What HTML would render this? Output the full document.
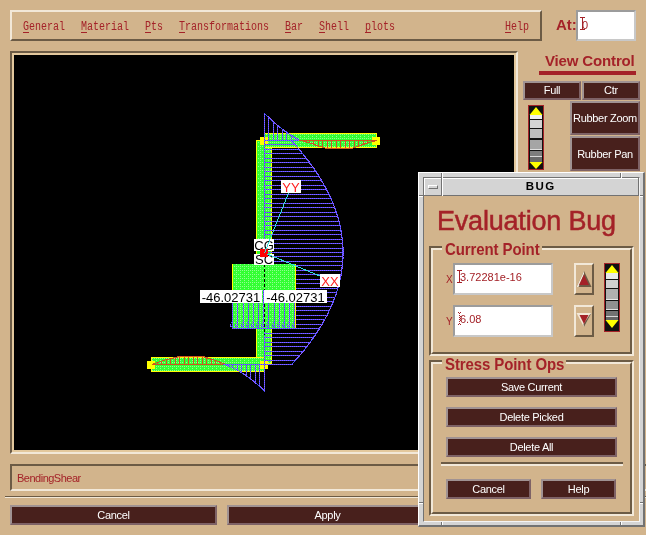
<!DOCTYPE html><html><head><meta charset="utf-8"><style>
html,body{margin:0;padding:0;width:646px;height:535px;overflow:hidden;background:#D2B48C;position:relative;font-family:'Liberation Sans',sans-serif}
body>div{position:absolute;box-sizing:border-box;will-change:transform}
u{text-decoration:underline;text-underline-offset:2.0px;text-decoration-thickness:0.8px}
</style></head><body>
<div style="left:10px;top:10px;width:532px;height:31px;border:2px solid;border-color:#F2E8D8 #6C5B45 #6C5B45 #F2E8D8;"></div>
<div style="left:23px;top:20px;white-space:pre;font-family:'Liberation Mono',monospace;font-size:10px;line-height:12px;transform:scaleY(1.25);transform-origin:0 0;color:#A42228">General</div>
<div style="left:23px;top:32px;width:6px;height:1px;background:#A42228"></div>
<div style="left:81px;top:20px;white-space:pre;font-family:'Liberation Mono',monospace;font-size:10px;line-height:12px;transform:scaleY(1.25);transform-origin:0 0;color:#A42228">Material</div>
<div style="left:81px;top:32px;width:6px;height:1px;background:#A42228"></div>
<div style="left:145px;top:20px;white-space:pre;font-family:'Liberation Mono',monospace;font-size:10px;line-height:12px;transform:scaleY(1.25);transform-origin:0 0;color:#A42228">Pts</div>
<div style="left:145px;top:32px;width:6px;height:1px;background:#A42228"></div>
<div style="left:179px;top:20px;white-space:pre;font-family:'Liberation Mono',monospace;font-size:10px;line-height:12px;transform:scaleY(1.25);transform-origin:0 0;color:#A42228">Transformations</div>
<div style="left:179px;top:32px;width:6px;height:1px;background:#A42228"></div>
<div style="left:285px;top:20px;white-space:pre;font-family:'Liberation Mono',monospace;font-size:10px;line-height:12px;transform:scaleY(1.25);transform-origin:0 0;color:#A42228">Bar</div>
<div style="left:285px;top:32px;width:6px;height:1px;background:#A42228"></div>
<div style="left:319px;top:20px;white-space:pre;font-family:'Liberation Mono',monospace;font-size:10px;line-height:12px;transform:scaleY(1.25);transform-origin:0 0;color:#A42228">Shell</div>
<div style="left:319px;top:32px;width:6px;height:1px;background:#A42228"></div>
<div style="left:365px;top:20px;white-space:pre;font-family:'Liberation Mono',monospace;font-size:10px;line-height:12px;transform:scaleY(1.25);transform-origin:0 0;color:#A42228">plots</div>
<div style="left:365px;top:32px;width:6px;height:1px;background:#A42228"></div>
<div style="left:505px;top:20px;white-space:pre;font-family:'Liberation Mono',monospace;font-size:10px;line-height:12px;transform:scaleY(1.25);transform-origin:0 0;color:#A42228">Help</div>
<div style="left:505px;top:32px;width:6px;height:1px;background:#A42228"></div>
<div style="left:556px;top:16px;white-space:pre;font:bold 15px 'Liberation Sans',sans-serif;color:#A42228">At:</div>
<div style="left:576px;top:10px;width:60px;height:31px;border:2px solid;border-color:#9C9C9C #C8C8C8 #C8C8C8 #9C9C9C;background:#fff;"></div>
<div style="left:582px;top:19px;white-space:pre;font:11px 'Liberation Sans',sans-serif;color:#A42228">0</div>
<div style="left:580px;top:17px;width:5px;height:1px;background:#A42228"></div>
<div style="left:580px;top:29px;width:5px;height:1px;background:#A42228"></div>
<div style="left:582px;top:17px;width:1px;height:13px;background:#A42228"></div>
<div style="left:545px;top:52px;white-space:pre;font:bold 15px 'Liberation Sans',sans-serif;color:#A42228;letter-spacing:-0.15px">View Control</div>
<div style="left:539px;top:71px;width:97px;height:4px;background:#A42228"></div>
<div style="left:523px;top:81px;width:58px;height:19px;border:2px solid;border-color:#A09292 #7E6266 #7E6266 #A09292;background:#48201C;color:#fff;font:11px/15px 'Liberation Sans',sans-serif;letter-spacing:-0.3px;text-align:center;white-space:pre"><span style="position:relative;top:0px">Full</span></div>
<div style="left:582px;top:81px;width:58px;height:19px;border:2px solid;border-color:#A09292 #7E6266 #7E6266 #A09292;background:#48201C;color:#fff;font:11px/15px 'Liberation Sans',sans-serif;letter-spacing:-0.3px;text-align:center;white-space:pre"><span style="position:relative;top:0px">Ctr</span></div>
<div style="left:570px;top:101px;width:70px;height:34px;border:2px solid;border-color:#A09292 #7E6266 #7E6266 #A09292;background:#48201C;color:#fff;font:11px/30px 'Liberation Sans',sans-serif;letter-spacing:-0.3px;text-align:center;white-space:pre"><span style="position:relative;top:0px">Rubber Zoom</span></div>
<div style="left:570px;top:136px;width:70px;height:35px;border:2px solid;border-color:#A09292 #7E6266 #7E6266 #A09292;background:#48201C;color:#fff;font:11px/31px 'Liberation Sans',sans-serif;letter-spacing:-0.3px;text-align:center;white-space:pre"><span style="position:relative;top:1px">Rubber Pan</span></div>
<div style="left:10px;top:51px;width:508px;height:403px;border:2px solid;border-color:#6C5B45 #F2E8D8 #F2E8D8 #6C5B45;"></div>
<div style="left:12px;top:53px;width:504px;height:399px;border:2px solid #E3C89D;"></div>
<svg style="position:absolute;left:14px;top:55px;will-change:transform" width="500" height="395" viewBox="14 55 500 395" shape-rendering="crispEdges"><defs><pattern id="gp" width="4" height="4" patternUnits="userSpaceOnUse"><rect width="4" height="4" fill="#33FF33"/><rect x="0" y="0" width="1" height="1" fill="#90FF90"/><rect x="0" y="2" width="1" height="1" fill="#90FF90"/><rect x="2" y="2" width="1" height="1" fill="#90FF90"/></pattern><pattern id="bp" width="2" height="2" patternUnits="userSpaceOnUse"><rect width="2" height="2" fill="#3C50FF"/><rect x="0" y="0" width="1" height="1" fill="#9A5CFF"/><rect x="1" y="1" width="1" height="1" fill="#9A5CFF"/></pattern></defs><rect x="14" y="55" width="500" height="395" fill="#000"/><rect x="256" y="140" width="16" height="224" fill="#FFFF00"/><rect x="257" y="141" width="14" height="222" fill="url(#gp)"/><rect x="264" y="133" width="113" height="15" fill="#FFFF00"/><rect x="265" y="134" width="111" height="13" fill="url(#gp)"/><rect x="151" y="357" width="114" height="15" fill="#FFFF00"/><rect x="152" y="358" width="112" height="13" fill="url(#gp)"/><rect x="372" y="137" width="8" height="8" fill="#FFFF00"/><rect x="260" y="137" width="8" height="8" fill="#FFFF00"/><rect x="147" y="361" width="8" height="8" fill="#FFFF00"/><rect x="260" y="361" width="8" height="8" fill="#FFFF00"/><polyline points="299.8,140.1 310.5,143.2 318.4,146.0 326.1,148.3 352.5,148.3 358.5,146.0 367.9,142.9 376.5,140.4" fill="none" stroke="#CC5522" stroke-width="1.1"/><rect x="299" y="140" width="78" height="1" fill="#CC5522"/><rect x="304" y="140" width="1" height="2" fill="#CC5522"/><rect x="309" y="140" width="1" height="3" fill="#CC5522"/><rect x="313" y="140" width="1" height="5" fill="#CC5522"/><rect x="318" y="140" width="1" height="7" fill="#CC5522"/><rect x="322" y="140" width="1" height="8" fill="#CC5522"/><rect x="327" y="140" width="1" height="9" fill="#CC5522"/><rect x="331" y="140" width="1" height="9" fill="#CC5522"/><rect x="336" y="140" width="1" height="9" fill="#CC5522"/><rect x="340" y="140" width="1" height="9" fill="#CC5522"/><rect x="345" y="140" width="1" height="9" fill="#CC5522"/><rect x="349" y="140" width="1" height="9" fill="#CC5522"/><rect x="354" y="140" width="1" height="8" fill="#CC5522"/><rect x="358" y="140" width="1" height="7" fill="#CC5522"/><rect x="363" y="140" width="1" height="5" fill="#CC5522"/><rect x="367" y="140" width="1" height="4" fill="#CC5522"/><rect x="372" y="140" width="1" height="2" fill="#CC5522"/><polyline points="153.4,364.0 158.7,362.1 165.2,360.0 170.5,358.7 178.4,356.8 204.1,356.8 208.7,358.4 215.2,360.4 221.2,362.6 224.5,364.0" fill="none" stroke="#CC5522" stroke-width="1.1"/><rect x="152" y="364" width="72" height="1" fill="#CC5522"/><rect x="220" y="362" width="1" height="3" fill="#CC5522"/><rect x="215" y="360" width="1" height="5" fill="#CC5522"/><rect x="211" y="359" width="1" height="6" fill="#CC5522"/><rect x="206" y="357" width="1" height="8" fill="#CC5522"/><rect x="202" y="356" width="1" height="9" fill="#CC5522"/><rect x="197" y="356" width="1" height="9" fill="#CC5522"/><rect x="193" y="356" width="1" height="9" fill="#CC5522"/><rect x="188" y="356" width="1" height="9" fill="#CC5522"/><rect x="184" y="356" width="1" height="9" fill="#CC5522"/><rect x="179" y="356" width="1" height="9" fill="#CC5522"/><rect x="175" y="357" width="1" height="8" fill="#CC5522"/><rect x="170" y="358" width="1" height="7" fill="#CC5522"/><rect x="166" y="359" width="1" height="6" fill="#CC5522"/><rect x="161" y="361" width="1" height="4" fill="#CC5522"/><rect x="157" y="362" width="1" height="3" fill="#CC5522"/><polyline points="291.2,140.5 292.1,141.5 293.0,142.5 293.9,143.5 294.8,144.5 295.7,145.5 296.6,146.5 297.5,147.5 298.3,148.5 299.2,149.5 300.0,150.5 300.9,151.5 301.7,152.5 302.5,153.5 303.3,154.5 304.1,155.5 304.9,156.5 305.7,157.5 306.5,158.5 307.2,159.5 308.0,160.5 308.8,161.5 309.5,162.5 310.2,163.5 311.0,164.5 311.7,165.5 312.4,166.5 313.1,167.5 313.8,168.5 314.5,169.5 315.2,170.5 315.9,171.5 316.5,172.5 317.2,173.5 317.8,174.5 318.5,175.5 319.1,176.5 319.7,177.5 320.3,178.5 320.9,179.5 321.5,180.5 322.1,181.5 322.7,182.5 323.3,183.5 323.8,184.5 324.4,185.5 324.9,186.5 325.5,187.5 326.0,188.5 326.5,189.5 327.1,190.5 327.6,191.5 328.1,192.5 328.6,193.5 329.0,194.5 329.5,195.5 330.0,196.5 330.4,197.5 330.9,198.5 331.3,199.5 331.8,200.5 332.2,201.5 332.6,202.5 333.0,203.5 333.4,204.5 333.8,205.5 334.2,206.5 334.6,207.5 334.9,208.5 335.3,209.5 335.7,210.5 336.0,211.5 336.3,212.5 336.7,213.5 337.0,214.5 337.3,215.5 337.6,216.5 337.9,217.5 338.2,218.5 338.4,219.5 338.7,220.5 339.0,221.5 339.2,222.5 339.5,223.5 339.7,224.5 339.9,225.5 340.2,226.5 340.4,227.5 340.6,228.5 340.8,229.5 341.0,230.5 341.1,231.5 341.3,232.5 341.5,233.5 341.6,234.5 341.8,235.5 341.9,236.5 342.0,237.5 342.2,238.5 342.3,239.5 342.4,240.5 342.5,241.5 342.6,242.5 342.6,243.5 342.7,244.5 342.8,245.5 342.8,246.5 342.9,247.5 342.9,248.5 343.0,249.5 343.0,250.5 343.0,251.5 343.0,252.5 343.0,253.5 343.0,254.5 343.0,255.5 342.9,256.5 342.9,257.5 342.9,258.5 342.8,259.5 342.8,260.5 342.7,261.5 342.6,262.5 342.5,263.5 342.4,264.5 342.3,265.5 342.2,266.5 342.1,267.5 342.0,268.5 341.9,269.5 341.7,270.5 341.6,271.5 341.4,272.5 341.2,273.5 341.1,274.5 340.9,275.5 340.7,276.5 340.5,277.5 340.3,278.5 340.1,279.5 339.8,280.5 339.6,281.5 339.4,282.5 339.1,283.5 338.9,284.5 338.6,285.5 338.3,286.5 338.1,287.5 337.8,288.5 337.5,289.5 337.2,290.5 336.8,291.5 336.5,292.5 336.2,293.5 335.9,294.5 335.5,295.5 335.2,296.5 334.8,297.5 334.4,298.5 334.0,299.5 333.7,300.5 333.3,301.5 332.9,302.5 332.4,303.5 332.0,304.5 331.6,305.5 331.2,306.5 330.7,307.5 330.3,308.5 329.8,309.5 329.3,310.5 328.8,311.5 328.4,312.5 327.9,313.5 327.4,314.5 326.9,315.5 326.3,316.5 325.8,317.5 325.3,318.5 324.7,319.5 324.2,320.5 323.6,321.5 323.0,322.5 322.5,323.5 321.9,324.5 321.3,325.5 320.7,326.5 320.1,327.5 319.5,328.5 318.8,329.5 318.2,330.5 317.6,331.5 316.9,332.5 316.3,333.5 315.6,334.5 314.9,335.5 314.2,336.5 313.5,337.5 312.8,338.5 312.1,339.5 311.4,340.5 310.7,341.5 310.0,342.5 309.2,343.5 308.5,344.5 307.7,345.5 306.9,346.5 306.2,347.5 305.4,348.5 304.6,349.5 303.8,350.5 303.0,351.5 302.2,352.5 301.4,353.5 300.5,354.5 299.7,355.5 298.8,356.5 298.0,357.5 297.1,358.5 296.2,359.5 295.4,360.5 294.5,361.5 293.6,362.5 292.7,363.5 291.8,364.5" fill="none" stroke="url(#bp)" stroke-width="1.2"/><rect x="264" y="140" width="27" height="1" fill="url(#bp)"/><rect x="264" y="144" width="31" height="1" fill="url(#bp)"/><rect x="264" y="149" width="35" height="1" fill="url(#bp)"/><rect x="264" y="153" width="39" height="1" fill="url(#bp)"/><rect x="264" y="158" width="42" height="1" fill="url(#bp)"/><rect x="264" y="162" width="46" height="1" fill="url(#bp)"/><rect x="264" y="167" width="49" height="1" fill="url(#bp)"/><rect x="264" y="171" width="52" height="1" fill="url(#bp)"/><rect x="264" y="176" width="55" height="1" fill="url(#bp)"/><rect x="264" y="180" width="58" height="1" fill="url(#bp)"/><rect x="264" y="185" width="60" height="1" fill="url(#bp)"/><rect x="264" y="189" width="63" height="1" fill="url(#bp)"/><rect x="264" y="194" width="65" height="1" fill="url(#bp)"/><rect x="264" y="198" width="67" height="1" fill="url(#bp)"/><rect x="264" y="203" width="69" height="1" fill="url(#bp)"/><rect x="264" y="207" width="71" height="1" fill="url(#bp)"/><rect x="264" y="212" width="72" height="1" fill="url(#bp)"/><rect x="264" y="216" width="74" height="1" fill="url(#bp)"/><rect x="264" y="221" width="75" height="1" fill="url(#bp)"/><rect x="264" y="225" width="76" height="1" fill="url(#bp)"/><rect x="264" y="230" width="77" height="1" fill="url(#bp)"/><rect x="264" y="234" width="78" height="1" fill="url(#bp)"/><rect x="264" y="239" width="78" height="1" fill="url(#bp)"/><rect x="264" y="243" width="79" height="1" fill="url(#bp)"/><rect x="264" y="248" width="79" height="1" fill="url(#bp)"/><rect x="264" y="252" width="79" height="1" fill="url(#bp)"/><rect x="264" y="256" width="79" height="1" fill="url(#bp)"/><rect x="264" y="261" width="79" height="1" fill="url(#bp)"/><rect x="264" y="265" width="78" height="1" fill="url(#bp)"/><rect x="264" y="270" width="78" height="1" fill="url(#bp)"/><rect x="264" y="274" width="77" height="1" fill="url(#bp)"/><rect x="264" y="279" width="76" height="1" fill="url(#bp)"/><rect x="264" y="283" width="75" height="1" fill="url(#bp)"/><rect x="264" y="288" width="74" height="1" fill="url(#bp)"/><rect x="264" y="292" width="73" height="1" fill="url(#bp)"/><rect x="264" y="297" width="71" height="1" fill="url(#bp)"/><rect x="264" y="301" width="69" height="1" fill="url(#bp)"/><rect x="264" y="306" width="67" height="1" fill="url(#bp)"/><rect x="264" y="310" width="65" height="1" fill="url(#bp)"/><rect x="264" y="315" width="63" height="1" fill="url(#bp)"/><rect x="264" y="319" width="61" height="1" fill="url(#bp)"/><rect x="264" y="324" width="58" height="1" fill="url(#bp)"/><rect x="264" y="328" width="55" height="1" fill="url(#bp)"/><rect x="264" y="333" width="52" height="1" fill="url(#bp)"/><rect x="264" y="337" width="50" height="1" fill="url(#bp)"/><rect x="264" y="342" width="46" height="1" fill="url(#bp)"/><rect x="264" y="346" width="43" height="1" fill="url(#bp)"/><rect x="264" y="351" width="39" height="1" fill="url(#bp)"/><rect x="264" y="355" width="36" height="1" fill="url(#bp)"/><rect x="264" y="360" width="31" height="1" fill="url(#bp)"/><rect x="264" y="364" width="28" height="1" fill="url(#bp)"/><rect x="264" y="113" width="1" height="279" fill="url(#bp)"/><polyline points="264.5,113.4 265.5,114.4 266.5,115.4 267.5,116.4 268.5,117.3 269.5,118.2 270.5,119.2 271.5,120.1 272.5,121.0 273.5,121.9 274.5,122.8 275.5,123.6 276.5,124.5 277.5,125.3 278.5,126.1 279.5,126.9 280.5,127.7 281.5,128.5 282.5,129.3 283.5,130.0 284.5,130.8 285.5,131.5 286.5,132.2 287.5,132.9 288.5,133.6 289.5,134.3 290.5,134.9 291.5,135.6 292.5,136.2 293.5,136.8 294.5,137.5 295.5,138.1 296.5,138.6 297.5,139.2 298.5,139.8" fill="none" stroke="url(#bp)" stroke-width="1.2"/><rect x="268" y="117" width="1" height="23" fill="url(#bp)"/><rect x="273" y="121" width="1" height="19" fill="url(#bp)"/><rect x="277" y="125" width="1" height="15" fill="url(#bp)"/><rect x="282" y="129" width="1" height="11" fill="url(#bp)"/><rect x="286" y="132" width="1" height="8" fill="url(#bp)"/><rect x="291" y="135" width="1" height="5" fill="url(#bp)"/><rect x="295" y="138" width="1" height="2" fill="url(#bp)"/><rect x="264" y="140" width="35" height="1" fill="url(#bp)"/><polyline points="223.5,364.1 224.5,364.4 225.5,364.8 226.5,365.1 227.5,365.5 228.5,365.9 229.5,366.3 230.5,366.8 231.5,367.2 232.5,367.7 233.5,368.2 234.5,368.7 235.5,369.2 236.5,369.7 237.5,370.3 238.5,370.8 239.5,371.4 240.5,372.0 241.5,372.6 242.5,373.2 243.5,373.9 244.5,374.5 245.5,375.2 246.5,375.9 247.5,376.6 248.5,377.3 249.5,378.0 250.5,378.8 251.5,379.6 252.5,380.4 253.5,381.2 254.5,382.0 255.5,382.8 256.5,383.7 257.5,384.5 258.5,385.4 259.5,386.3 260.5,387.2 261.5,388.1 262.5,389.1 263.5,390.1 264.5,391.0" fill="none" stroke="url(#bp)" stroke-width="1.2"/><rect x="223" y="364" width="42" height="1" fill="url(#bp)"/><rect x="259" y="364" width="1" height="23" fill="url(#bp)"/><rect x="255" y="364" width="1" height="19" fill="url(#bp)"/><rect x="250" y="364" width="1" height="15" fill="url(#bp)"/><rect x="246" y="364" width="1" height="12" fill="url(#bp)"/><rect x="241" y="364" width="1" height="9" fill="url(#bp)"/><rect x="237" y="364" width="1" height="7" fill="url(#bp)"/><rect x="232" y="364" width="1" height="4" fill="url(#bp)"/><rect x="228" y="364" width="1" height="2" fill="url(#bp)"/><rect x="223" y="364" width="1" height="1" fill="url(#bp)"/><rect x="232" y="264" width="64" height="65" fill="#FFFF00"/><rect x="233" y="264" width="62" height="65" fill="url(#gp)"/><rect x="232" y="290" width="1" height="39" fill="url(#bp)"/><path d="M230.5,322.5 h1.5 M230.5,323.5 v3 h1.5" fill="none" stroke="url(#bp)" stroke-width="1"/><rect x="237" y="290" width="1" height="39" fill="url(#bp)"/><path d="M235.5,322.5 h1.5 M235.5,323.5 v3 h1.5" fill="none" stroke="url(#bp)" stroke-width="1"/><rect x="243" y="290" width="1" height="39" fill="url(#bp)"/><path d="M241.5,322.5 h1.5 M241.5,323.5 v3 h1.5" fill="none" stroke="url(#bp)" stroke-width="1"/><rect x="248" y="290" width="1" height="39" fill="url(#bp)"/><path d="M246.5,322.5 h1.5 M246.5,323.5 v3 h1.5" fill="none" stroke="url(#bp)" stroke-width="1"/><rect x="253" y="290" width="1" height="39" fill="url(#bp)"/><path d="M251.5,322.5 h1.5 M251.5,323.5 v3 h1.5" fill="none" stroke="url(#bp)" stroke-width="1"/><rect x="258" y="290" width="1" height="39" fill="url(#bp)"/><path d="M256.5,322.5 h1.5 M256.5,323.5 v3 h1.5" fill="none" stroke="url(#bp)" stroke-width="1"/><rect x="263" y="290" width="1" height="39" fill="url(#bp)"/><path d="M261.5,322.5 h1.5 M261.5,323.5 v3 h1.5" fill="none" stroke="url(#bp)" stroke-width="1"/><rect x="268" y="290" width="1" height="39" fill="url(#bp)"/><path d="M266.5,322.5 h1.5 M266.5,323.5 v3 h1.5" fill="none" stroke="url(#bp)" stroke-width="1"/><rect x="274" y="290" width="1" height="39" fill="url(#bp)"/><path d="M272.5,322.5 h1.5 M272.5,323.5 v3 h1.5" fill="none" stroke="url(#bp)" stroke-width="1"/><rect x="279" y="290" width="1" height="39" fill="url(#bp)"/><path d="M277.5,322.5 h1.5 M277.5,323.5 v3 h1.5" fill="none" stroke="url(#bp)" stroke-width="1"/><rect x="284" y="290" width="1" height="39" fill="url(#bp)"/><path d="M282.5,322.5 h1.5 M282.5,323.5 v3 h1.5" fill="none" stroke="url(#bp)" stroke-width="1"/><rect x="289" y="290" width="1" height="39" fill="url(#bp)"/><path d="M287.5,322.5 h1.5 M287.5,323.5 v3 h1.5" fill="none" stroke="url(#bp)" stroke-width="1"/><rect x="294" y="290" width="1" height="39" fill="url(#bp)"/><path d="M292.5,322.5 h1.5 M292.5,323.5 v3 h1.5" fill="none" stroke="url(#bp)" stroke-width="1"/><rect x="232" y="328" width="64" height="1" fill="url(#bp)"/><line x1="264.5" y1="264" x2="264.5" y2="335" stroke="#000" stroke-width="1" stroke-dasharray="3,2"/><rect x="281" y="180" width="20" height="13" fill="#fff"/><text x="291.0" y="191.5" text-anchor="middle" font-family="Liberation Sans" font-size="13" fill="#FF2020">YY</text><rect x="320" y="274" width="20" height="13" fill="#fff"/><text x="330.0" y="285.5" text-anchor="middle" font-family="Liberation Sans" font-size="13" fill="#FF2020">XX</text><rect x="254" y="239" width="20" height="12" fill="#fff"/><text x="264.0" y="249.5" text-anchor="middle" font-family="Liberation Sans" font-size="13" fill="#000">CG</text><rect x="254" y="254" width="20" height="11" fill="#fff"/><text x="264.0" y="264.0" text-anchor="middle" font-family="Liberation Sans" font-size="13" fill="#000">SC</text><rect x="260" y="249" width="8" height="8" fill="#FF0000"/><rect x="200" y="290" width="62" height="13" fill="#fff"/><text x="231.0" y="301.5" text-anchor="middle" font-family="Liberation Sans" font-size="13" fill="#000">-46.02731</text><rect x="264" y="290" width="63" height="13" fill="#fff"/><text x="295.5" y="301.5" text-anchor="middle" font-family="Liberation Sans" font-size="13" fill="#000">-46.02731</text><line x1="288.5" y1="193" x2="264.5" y2="253" stroke="#33DDDD" stroke-width="1"/><line x1="267" y1="254" x2="320" y2="276" stroke="#33DDDD" stroke-width="1"/></svg>
<div style="left:10px;top:464px;width:640px;height:27px;border:2px solid;border-color:#6C5B45 #F2E8D8 #F2E8D8 #6C5B45;"></div>
<div style="left:17px;top:472px;white-space:pre;font:11px 'Liberation Sans',sans-serif;color:#A42228;letter-spacing:-0.5px">BendingShear</div>
<div style="left:5px;top:496px;width:641px;height:1px;background:#6C5B45"></div>
<div style="left:5px;top:497px;width:641px;height:1px;background:#F2E8D8"></div>
<div style="left:10px;top:505px;width:207px;height:20px;border:2px solid;border-color:#A09292 #7E6266 #7E6266 #A09292;background:#48201C;color:#fff;font:11px/16px 'Liberation Sans',sans-serif;letter-spacing:-0.3px;text-align:center;white-space:pre"><span style="position:relative;top:0px">Cancel</span></div>
<div style="left:227px;top:505px;width:201px;height:20px;border:2px solid;border-color:#A09292 #7E6266 #7E6266 #A09292;background:#48201C;color:#fff;font:11px/16px 'Liberation Sans',sans-serif;letter-spacing:-0.3px;text-align:center;white-space:pre"><span style="position:relative;top:0px">Apply</span></div>
<div style="left:418px;top:172px;width:227px;height:355px;border:0px solid;border-color:#fff #727272 #727272 #fff;"></div>
<div style="left:418px;top:172px;width:227px;height:355px;background:#D4D4D4;border-top:1px solid #fff;border-left:1px solid #fff;border-right:2px solid #727272;border-bottom:2px solid #727272;"></div>
<div style="left:423px;top:177px;width:217px;height:345px;background:#D2B48C;border-top:1px solid #727272;border-left:1px solid #727272;border-right:1px solid #F4F4F4;border-bottom:1px solid #F4F4F4;"></div>
<div style="left:424px;top:178px;width:215px;height:18px;background:#D4D4D4;border-bottom:1px solid #727272;border-right:1px solid #727272"></div>
<div style="left:424px;top:178px;width:18px;height:17px;border-left:1px solid #fff;border-top:1px solid #fff;border-right:1px solid #727272;"></div>
<div style="left:442px;top:178px;width:196px;height:17px;border-left:1px solid #fff;border-top:1px solid #fff;"></div>
<div style="left:428px;top:185px;width:10px;height:4px;border:1px solid;border-color:#fff #727272 #727272 #fff;"></div>
<div style="left:441px;top:173px;width:1px;height:23px;background:#727272"></div>
<div style="left:442px;top:173px;width:1px;height:23px;background:#fff"></div>
<div style="left:620px;top:173px;width:1px;height:5px;background:#727272"></div>
<div style="left:621px;top:173px;width:1px;height:5px;background:#fff"></div>
<div style="left:419px;top:195px;width:4px;height:1px;background:#727272"></div>
<div style="left:419px;top:196px;width:4px;height:1px;background:#fff"></div>
<div style="left:640px;top:195px;width:3px;height:1px;background:#727272"></div>
<div style="left:640px;top:196px;width:3px;height:1px;background:#fff"></div>
<div style="left:441px;top:522px;width:1px;height:3px;background:#727272"></div>
<div style="left:442px;top:522px;width:1px;height:3px;background:#fff"></div>
<div style="left:620px;top:522px;width:1px;height:3px;background:#727272"></div>
<div style="left:621px;top:522px;width:1px;height:3px;background:#fff"></div>
<div style="left:419px;top:502px;width:4px;height:1px;background:#727272"></div>
<div style="left:419px;top:503px;width:4px;height:1px;background:#fff"></div>
<div style="left:640px;top:502px;width:3px;height:1px;background:#727272"></div>
<div style="left:640px;top:503px;width:3px;height:1px;background:#fff"></div>
<div style="left:520px;top:180px;white-space:pre;font:bold 11.5px 'Liberation Sans',sans-serif;color:#000;width:40px;text-align:center;letter-spacing:1.4px;text-indent:1.4px">BUG</div>
<div style="left:437px;top:206px;white-space:pre;font:27px 'Liberation Sans',sans-serif;color:#A42228;-webkit-text-stroke:0.5px #A42228;letter-spacing:-0.2px">Evaluation Bug</div>
<div style="left:429px;top:246px;width:205px;height:110px;border:2px solid;border-color:#6C5B45 #F2E8D8 #F2E8D8 #6C5B45;"></div>
<div style="left:431px;top:248px;width:201px;height:106px;border:2px solid;border-color:#F2E8D8 #6C5B45 #6C5B45 #F2E8D8;"></div>
<div style="left:442px;top:244px;width:100px;height:8px;background:#D2B48C"></div>
<div style="left:445px;top:240px;white-space:pre;font:bold 15px/17px 'Liberation Sans',sans-serif;color:#A42228;letter-spacing:-0.1px;transform:scaleY(1.1);transform-origin:0 0">Current Point</div>
<div style="left:446px;top:274px;white-space:pre;font:10px 'Liberation Sans',sans-serif;color:#A42228">X</div>
<div style="left:446px;top:316px;white-space:pre;font:10px 'Liberation Sans',sans-serif;color:#A42228">Y</div>
<div style="left:453px;top:263px;width:100px;height:32px;border:2px solid;border-color:#9C9C9C #C8C8C8 #C8C8C8 #9C9C9C;background:#fff;"></div>
<div style="left:453px;top:305px;width:100px;height:32px;border:2px solid;border-color:#9C9C9C #C8C8C8 #C8C8C8 #9C9C9C;background:#fff;"></div>
<div style="left:460px;top:271px;white-space:pre;font:11px 'Liberation Sans',sans-serif;color:#A42228">3.72281e-16</div>
<div style="left:460px;top:313px;white-space:pre;font:11px 'Liberation Sans',sans-serif;color:#A42228">6.08</div>
<div style="left:457px;top:270px;width:5px;height:1px;background:#A42228"></div>
<div style="left:457px;top:282px;width:5px;height:1px;background:#A42228"></div>
<div style="left:459px;top:270px;width:1px;height:13px;background:#A42228"></div>
<div style="left:458px;top:312px;width:1px;height:1px;background:#A42228"></div>
<div style="left:460px;top:312px;width:1px;height:1px;background:#A42228"></div>
<div style="left:459px;top:313px;width:1px;height:1px;background:#A42228"></div>
<div style="left:459px;top:315px;width:1px;height:1px;background:#A42228"></div>
<div style="left:460px;top:316px;width:1px;height:1px;background:#A42228"></div>
<div style="left:459px;top:317px;width:1px;height:1px;background:#A42228"></div>
<div style="left:460px;top:318px;width:1px;height:1px;background:#A42228"></div>
<div style="left:459px;top:319px;width:1px;height:1px;background:#A42228"></div>
<div style="left:460px;top:320px;width:1px;height:1px;background:#A42228"></div>
<div style="left:459px;top:321px;width:1px;height:1px;background:#A42228"></div>
<div style="left:459px;top:323px;width:1px;height:1px;background:#A42228"></div>
<div style="left:458px;top:324px;width:1px;height:1px;background:#A42228"></div>
<div style="left:460px;top:324px;width:1px;height:1px;background:#A42228"></div>
<div style="left:574px;top:263px;width:20px;height:32px;border:2px solid;border-color:#F2E8D8 #6C5B45 #6C5B45 #F2E8D8;"></div>
<div style="left:574px;top:305px;width:20px;height:32px;border:2px solid;border-color:#F2E8D8 #6C5B45 #6C5B45 #F2E8D8;"></div>
<svg style="position:absolute;left:574px;top:263px" width="20" height="74" viewBox="574 263 20 74"><polygon points="584,271 576.5,287 591.5,287" fill="#6C5B45"/><polygon points="584,271 576.5,287 578.5,287 584,274" fill="#F2E8D8"/><polygon points="584,274.5 579,285 589,285" fill="#A42228"/><polygon points="576.5,313 591.5,313 584,327" fill="#F2E8D8"/><polygon points="591.5,313 584,327 583.5,324 589.5,315" fill="#6C5B45"/><polygon points="579.5,315 588.5,315 584,324" fill="#A42228"/></svg>
<div style="left:429px;top:360px;width:205px;height:156px;border:2px solid;border-color:#6C5B45 #F2E8D8 #F2E8D8 #6C5B45;"></div>
<div style="left:431px;top:362px;width:201px;height:152px;border:2px solid;border-color:#F2E8D8 #6C5B45 #6C5B45 #F2E8D8;"></div>
<div style="left:442px;top:358px;width:124px;height:8px;background:#D2B48C"></div>
<div style="left:445px;top:355px;white-space:pre;font:bold 15px/17px 'Liberation Sans',sans-serif;color:#A42228;letter-spacing:-0.1px;transform:scaleY(1.1);transform-origin:0 0">Stress Point Ops</div>
<div style="left:446px;top:377px;width:171px;height:20px;border:2px solid;border-color:#A09292 #7E6266 #7E6266 #A09292;background:#48201C;color:#fff;font:11px/16px 'Liberation Sans',sans-serif;letter-spacing:-0.3px;text-align:center;white-space:pre"><span style="position:relative;top:0px">Save Current</span></div>
<div style="left:446px;top:407px;width:171px;height:20px;border:2px solid;border-color:#A09292 #7E6266 #7E6266 #A09292;background:#48201C;color:#fff;font:11px/16px 'Liberation Sans',sans-serif;letter-spacing:-0.3px;text-align:center;white-space:pre"><span style="position:relative;top:0px">Delete Picked</span></div>
<div style="left:446px;top:437px;width:171px;height:20px;border:2px solid;border-color:#A09292 #7E6266 #7E6266 #A09292;background:#48201C;color:#fff;font:11px/16px 'Liberation Sans',sans-serif;letter-spacing:-0.3px;text-align:center;white-space:pre"><span style="position:relative;top:0px">Delete All</span></div>
<div style="left:441px;top:462px;width:182px;height:2px;background:#6C5B45"></div>
<div style="left:441px;top:464px;width:182px;height:2px;background:#F2E8D8"></div>
<div style="left:446px;top:479px;width:85px;height:20px;border:2px solid;border-color:#A09292 #7E6266 #7E6266 #A09292;background:#48201C;color:#fff;font:11px/16px 'Liberation Sans',sans-serif;letter-spacing:-0.3px;text-align:center;white-space:pre"><span style="position:relative;top:0px">Cancel</span></div>
<div style="left:541px;top:479px;width:75px;height:20px;border:2px solid;border-color:#A09292 #7E6266 #7E6266 #A09292;background:#48201C;color:#fff;font:11px/16px 'Liberation Sans',sans-serif;letter-spacing:-0.3px;text-align:center;white-space:pre"><span style="position:relative;top:0px">Help</span></div><svg style="position:absolute;left:528px;top:105px" width="16" height="65" viewBox="528 105 16 65" shape-rendering="crispEdges"><rect x="528" y="105" width="16" height="65" fill="#A42228"/><rect x="529" y="106" width="14" height="63" fill="#111"/><rect x="530" y="115" width="12" height="4" fill="#EFEFEF"/><rect x="530" y="120" width="12" height="8" fill="#D4D4D4"/><rect x="530" y="129" width="12" height="9" fill="#BDBDBD"/><rect x="530" y="140" width="12" height="9" fill="#A5A5A5"/><rect x="530" y="149" width="12" height="1" fill="#E0E0E0"/><rect x="530" y="151" width="12" height="5" fill="#7D7D7D"/><rect x="530" y="156" width="12" height="1" fill="#D8D8D8"/><rect x="530" y="157" width="12" height="5" fill="#6A6A6A"/><polygon points="536.0,107 542.5,115 529.5,115" fill="#FF0" shape-rendering="auto"/><polygon points="529.5,162 542.5,162 536.0,169" fill="#FF0" shape-rendering="auto"/></svg><svg style="position:absolute;left:604px;top:263px" width="16" height="69" viewBox="604 263 16 69" shape-rendering="crispEdges"><rect x="604" y="263" width="16" height="69" fill="#A42228"/><rect x="605" y="264" width="14" height="67" fill="#111"/><rect x="606" y="273" width="12" height="6" fill="#E8E8E8"/><rect x="606" y="280" width="12" height="8" fill="#D0D0D0"/><rect x="606" y="289" width="12" height="10" fill="#B0B0B0"/><rect x="606" y="299" width="12" height="1" fill="#E8E8E8"/><rect x="606" y="301" width="12" height="8" fill="#909090"/><rect x="606" y="309" width="12" height="1" fill="#E0E0E0"/><rect x="606" y="311" width="12" height="5" fill="#727272"/><rect x="606" y="316" width="12" height="1" fill="#D8D8D8"/><rect x="606" y="317" width="12" height="3" fill="#666"/><polygon points="612.0,265 618.5,273 605.5,273" fill="#FF0" shape-rendering="auto"/><polygon points="605.5,320 618.5,320 612.0,328" fill="#FF0" shape-rendering="auto"/></svg>
</body></html>
